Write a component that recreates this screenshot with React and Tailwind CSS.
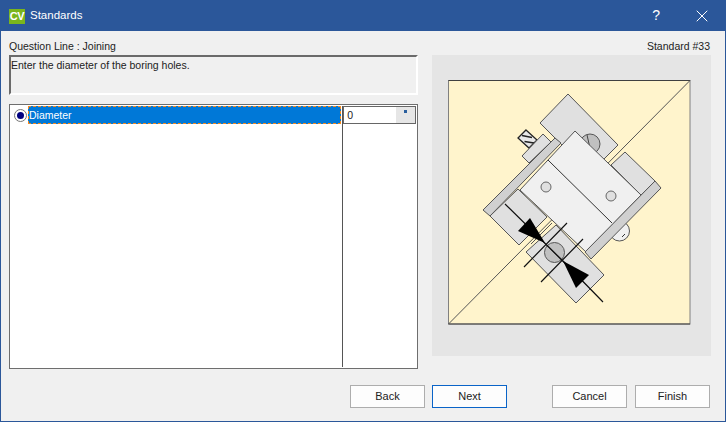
import { X } from "lucide-react";

const Diagram = () => (
    <svg viewBox="448 80 243 245" className="w-[243px] h-[245px] block">
        <rect x="448.5" y="80.5" width="241.5" height="243.5" fill="#fff4cc" stroke="#808080" />
        <path d="M448.5 80.5H690M448.5 324H690" stroke="#404040" />
        <path d="M690 80.5L448.5 324" stroke="#555" />

        {/* extra line in the gap */}
        <path d="M552 223L531 244" stroke="#555" />

        {/* top plate */}
        <polygon points="568,94 618,145 590,173 540,123" fill="#e0e0e0" stroke="#555" />
        <circle cx="590" cy="144" r="10" fill="#c0c0c0" stroke="#555" />
        <path d="M587 135L590 148" stroke="#444" />

        {/* right block */}
        <polygon points="625,152 655,181 641,195 611,165" fill="#e0e0e0" stroke="#555" />

        {/* half circle lower right */}
        <circle cx="619.5" cy="231" r="10" fill="#f0f0f0" stroke="#555" />
        <path d="M622 237L625 234" stroke="#333" />

        {/* screw and small piece */}
        <polygon points="526,130 537,140 529,148 518,138" fill="#e8e8e8" stroke="#222" strokeWidth="1.3" />
        <path d="M522 135.5L532 137.5M524.5 141.5L534 143" stroke="#222" strokeWidth="1.4" />
        <polygon points="543,134 551,142 529,163 522,156" fill="#e0e0e0" stroke="#555" />

        {/* main body */}
        <polygon points="575,131 641,195 586,252 520,190" fill="#f0f0f0" stroke="#555" />
        <path d="M548 160L612 223" stroke="#333" />
        <circle cx="546" cy="187" r="5" fill="#e0e0e0" stroke="#666" />
        <circle cx="611" cy="196" r="5" fill="#e0e0e0" stroke="#666" />

        {/* lower left block */}
        <polygon points="518,189 547,217 519,245 490,216" fill="#e0e0e0" stroke="#555" />

        {/* side bars */}
        <polygon points="555,138 561,143 490,216 483,210" fill="#d0d0d0" stroke="#555" />
        <polygon points="655,181 661,188 591,259 585,252" fill="#d0d0d0" stroke="#555" />

        {/* lower block */}
        <polygon points="556,225 604,275 576,303 526,252" fill="#e0e0e0" stroke="#555" />
        <circle cx="554.5" cy="252.5" r="10" fill="#c0c0c0" stroke="#555" />

        {/* dimension */}
        <path d="M567 223L524 267M583 239L541 282" stroke="#111" strokeWidth="1.2" />
        <path d="M505 204L563 261L603 302" stroke="#111" strokeWidth="1.2" />
        <polygon points="545,243 530,218 518,231" fill="#000" />
        <polygon points="563,261 589,275 576,288" fill="#000" />
    </svg>
);

const FormButton = ({ label, focused }) => (
    <button
        className={`w-[75px] h-[23px] bg-[#fdfdfd] border text-[11px] text-[#222] ${
            focused ? "border-[#0a64c8]" : "border-[#adadad]"
        }`}
    >
        {label}
    </button>
);

export default function App() {
    return (
        <div className="w-[726px] h-[422px] flex flex-col bg-[#f0f0f0] border border-t-0 border-[#2b579a] font-['Liberation_Sans',sans-serif] text-[10.5px] text-[#222] overflow-hidden">
            <div className="h-[31px] shrink-0 bg-[#2b579a] flex items-center pl-[8px] text-white">
                <div className="mt-[1px] w-[16px] h-[15px] bg-[#7ab51d] flex items-center justify-center text-[11px] font-bold leading-none tracking-[-0.5px]">
                    CV
                </div>
                <span className="ml-[5px] mt-[1px] text-[11.5px]">Standards</span>
                <span className="ml-auto text-[14px]">?</span>
                <X className="ml-[32px] mr-[13px]" size={20} strokeWidth={1.2} />
            </div>

            <div className="flex flex-1 min-h-0 pl-[8px] pr-[15px]">
                <div className="w-[409px] flex flex-col">
                    <div className="h-[24px] pt-[8px] leading-[15px]">Question Line : Joining</div>
                    <div className="h-[40px] border-2 border-t-2 border-[#6a6a6a] border-r-white border-b-white pt-[1px] leading-[14px]">
                        Enter the diameter of the boring holes.
                    </div>
                    <div className="mt-[9px] h-[265px] border border-[#6e6e6e] bg-white flex p-[1px]">
                        <div className="w-[332px] h-[18px] flex items-center">
                            <span className="w-[13px] h-[13px] ml-[3px] rounded-full border border-[#777] bg-white flex items-center justify-center shrink-0">
                                <span className="w-[7px] h-[7px] rounded-full bg-[#000080]" />
                            </span>
                            <div className="ml-[1px] flex-1 h-[18px] bg-[#0078d7] border border-dashed border-[#f58a1f] text-white leading-[16px]">
                                Diameter
                            </div>
                        </div>
                        <div className="ml-[1px] w-[1px] h-full bg-[#555]" />
                        <div className="w-[73px] h-[18px] border border-[#666] flex">
                            <span className="flex-1 pl-[3px] leading-[16px]">0</span>
                            <div className="w-[19px] bg-[#e6e6e6] flex justify-center pt-[3px]">
                                <span className="w-[3px] h-[3px] bg-[#2a5f9e]" />
                            </div>
                        </div>
                    </div>
                </div>

                <div className="w-[279px] ml-[14px] flex flex-col">
                    <div className="h-[24px] pt-[8px] pr-[1px] leading-[15px] text-right">Standard #33</div>
                    <div className="w-[279px] h-[301px] bg-[#e5e5e5] pt-[25px] pl-[16px]">
                        <Diagram />
                    </div>
                </div>
            </div>

            <div className="flex h-[52px] shrink-0 pt-[16px] pl-[349px]">
                <div className="flex gap-[7px]">
                    <FormButton label="Back" />
                    <FormButton label="Next" focused />
                </div>
                <div className="flex gap-[8px] ml-[45px]">
                    <FormButton label="Cancel" />
                    <FormButton label="Finish" />
                </div>
            </div>
        </div>
    );
}
